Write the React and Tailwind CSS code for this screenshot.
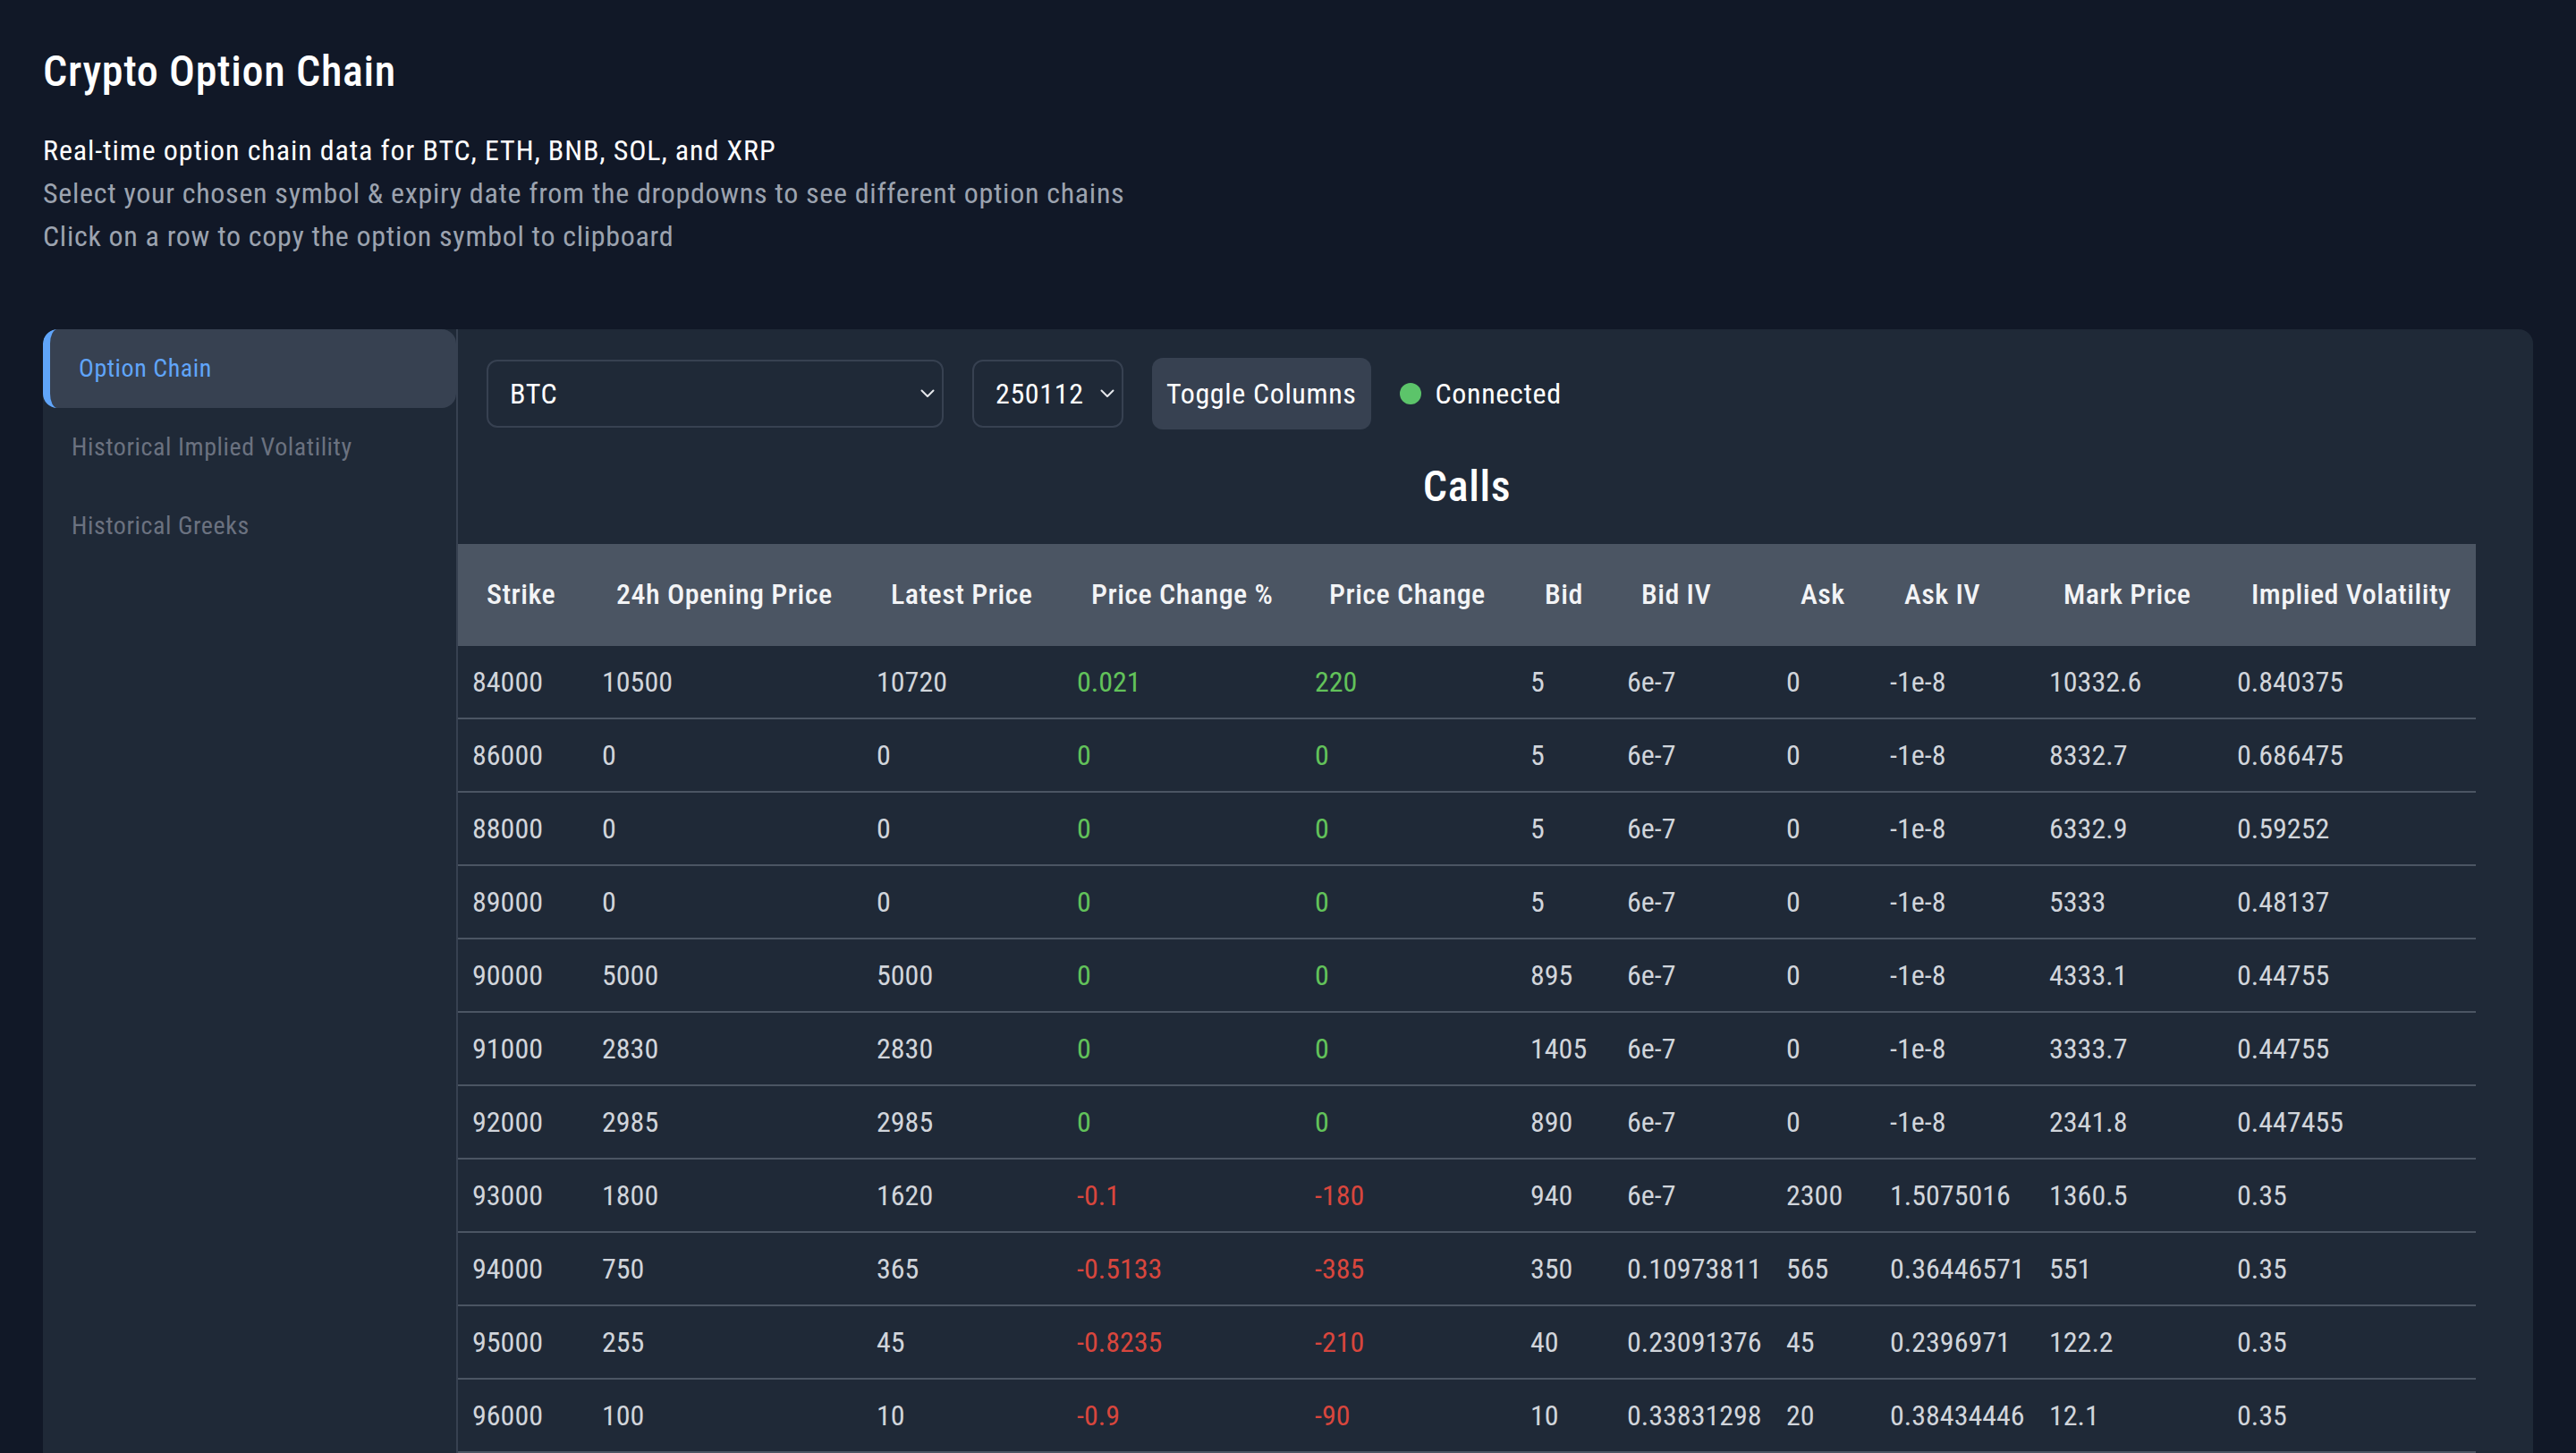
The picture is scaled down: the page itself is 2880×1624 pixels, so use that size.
import React from 'react';

const columns = [
  { label: 'Strike', width: 'w-[145px]' },
  { label: '24h Opening Price', width: 'w-[307px]' },
  { label: 'Latest Price', width: 'w-[224px]' },
  { label: 'Price Change %', width: 'w-[266px]' },
  { label: 'Price Change', width: 'w-[241px]' },
  { label: 'Bid', width: 'w-[108px]' },
  { label: 'Bid IV', width: 'w-[178px]' },
  { label: 'Ask', width: 'w-[116px]' },
  { label: 'Ask IV', width: 'w-[178px]' },
  { label: 'Mark Price', width: 'w-[210px]' },
  { label: 'Implied Volatility', width: 'w-[283px]' },
];

// strike, open, latest, change %, change, bid, bid iv, ask, ask iv, mark, iv
const rows = [
  ['84000', '10500', '10720', '0.021', '220', '5', '6e-7', '0', '-1e-8', '10332.6', '0.840375'],
  ['86000', '0', '0', '0', '0', '5', '6e-7', '0', '-1e-8', '8332.7', '0.686475'],
  ['88000', '0', '0', '0', '0', '5', '6e-7', '0', '-1e-8', '6332.9', '0.59252'],
  ['89000', '0', '0', '0', '0', '5', '6e-7', '0', '-1e-8', '5333', '0.48137'],
  ['90000', '5000', '5000', '0', '0', '895', '6e-7', '0', '-1e-8', '4333.1', '0.44755'],
  ['91000', '2830', '2830', '0', '0', '1405', '6e-7', '0', '-1e-8', '3333.7', '0.44755'],
  ['92000', '2985', '2985', '0', '0', '890', '6e-7', '0', '-1e-8', '2341.8', '0.447455'],
  ['93000', '1800', '1620', '-0.1', '-180', '940', '6e-7', '2300', '1.5075016', '1360.5', '0.35'],
  ['94000', '750', '365', '-0.5133', '-385', '350', '0.10973811', '565', '0.36446571', '551', '0.35'],
  ['95000', '255', '45', '-0.8235', '-210', '40', '0.23091376', '45', '0.2396971', '122.2', '0.35'],
  ['96000', '100', '10', '-0.9', '-90', '10', '0.33831298', '20', '0.38434446', '12.1', '0.35'],
];

const tabs = ['Option Chain', 'Historical Implied Volatility', 'Historical Greeks'];

const Chevron = () => (
  <svg width="16" height="10" viewBox="0 0 16 10" fill="none" className="shrink-0">
    <polyline points="1.5,1.5 8,8 14.5,1.5" stroke="#e5e7eb" strokeWidth="2" strokeLinecap="round" strokeLinejoin="round" />
  </svg>
);

const FakeSelect = ({ value, width }) => (
  <div className={`${width} h-[76px] flex items-center justify-between pl-[24px] pr-[8px] rounded-[12px] border-2 border-[#374151] text-white cursor-pointer`}>
    <span>{value}</span>
    <Chevron />
  </div>
);

const changeColor = (v, idx) => {
  if (idx !== 3 && idx !== 4) return 'text-[#d1d5db]';
  return v.startsWith('-') ? 'text-[#d8463d]' : 'text-[#62c25a]';
};

const App = () => {
  return (
    <div className="min-h-screen bg-[#111827] p-[48px] text-white font-['Roboto_Condensed','Roboto',sans-serif]">
      <h1 className="text-[48px] leading-[64px] font-medium tracking-[0.014em]">Crypto Option Chain</h1>

      <div className="mt-[32px] text-[32px] leading-[48px] tracking-[0.022em]">
        <p className="text-white tracking-[0.028em]">Real-time option chain data for BTC, ETH, BNB, SOL, and XRP</p>
        <p className="text-[#9ca3af]">Select your chosen symbol &amp; expiry date from the dropdowns to see different option chains</p>
        <p className="text-[#9ca3af]">Click on a row to copy the option symbol to clipboard</p>
      </div>

      <div className="mt-[80px] flex rounded-[16px] bg-[#1f2937] overflow-hidden">
        {/* sidebar */}
        <div className="w-[464px] shrink-0 border-r-2 border-[#374151]">
          {tabs.map((t, i) => (
            <div
              key={t}
              className={
                i === 0
                  ? 'h-[88px] flex items-center px-[32px] text-[28px] leading-[40px] tracking-[0.02em] rounded-[16px] border-l-[8px] border-[#60a5fa] bg-[#374151] text-[#60a5fa]'
                  : 'h-[88px] flex items-center px-[32px] text-[28px] leading-[40px] tracking-[0.02em] text-[#6b7280]'
              }
            >
              {t}
            </div>
          ))}
        </div>

        {/* main */}
        <div className="flex-1 pt-[32px] pr-[64px] pb-[32px]">
          <div className="flex items-center gap-[32px] pl-[32px] text-[32px] leading-[48px] tracking-[0.02em]">
            <FakeSelect value="BTC" width="w-[511px]" />
            <FakeSelect value="250112" width="w-[169px]" />
            <button className="h-[80px] px-[16px] rounded-[12px] bg-[#374151] text-white">Toggle Columns</button>
            <div className="flex items-center gap-[16px]">
              <span className="w-[24px] h-[24px] rounded-full bg-[#5cc46a]" />
              <span>Connected</span>
            </div>
          </div>

          <h2 className="mt-[32px] text-center text-[48px] leading-[64px] font-medium tracking-[0.014em]">Calls</h2>

          <table className="mt-[32px] w-[2256px] table-fixed border-collapse text-[32px] leading-[48px] tracking-[0.015em]">
            <colgroup>
              {columns.map((c) => (
                <col key={c.label} className={c.width} />
              ))}
            </colgroup>
            <thead>
              <tr className="bg-[#4b5563] border-b-2 border-[#4b5563]">
                {columns.map((c) => (
                  <th key={c.label} className="px-[32px] py-[32px] text-left font-medium whitespace-nowrap text-[#f3f4f6]">
                    {c.label}
                  </th>
                ))}
              </tr>
            </thead>
            <tbody>
              {rows.map((r) => (
                <tr key={r[0]} className="border-b-2 border-[#4b5563] cursor-pointer">
                  {r.map((v, i) => (
                    <td key={i} className={`px-[16px] py-[16px] whitespace-nowrap tracking-normal ${changeColor(v, i)}`}>
                      {v}
                    </td>
                  ))}
                </tr>
              ))}
            </tbody>
          </table>
        </div>
      </div>
    </div>
  );
};

export default App;
